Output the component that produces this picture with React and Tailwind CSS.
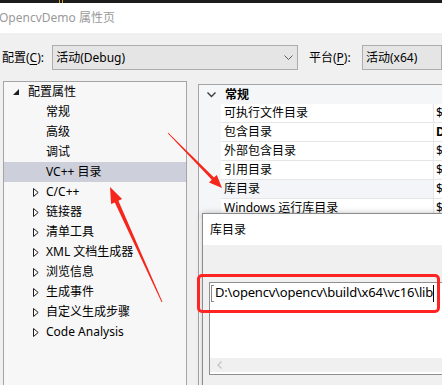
import React from 'react';

const treeRows = [
  { label: '配置属性', level: 0, icon: 'open' },
  { label: '常规', level: 1 },
  { label: '高级', level: 1 },
  { label: '调试', level: 1 },
  { label: 'VC++ 目录', level: 1, selected: true },
  { label: 'C/C++', level: 1, icon: 'closed' },
  { label: '链接器', level: 1, icon: 'closed' },
  { label: '清单工具', level: 1, icon: 'closed' },
  { label: 'XML 文档生成器', level: 1, icon: 'closed' },
  { label: '浏览信息', level: 1, icon: 'closed' },
  { label: '生成事件', level: 1, icon: 'closed' },
  { label: '自定义生成步骤', level: 1, icon: 'closed' },
  { label: 'Code Analysis', level: 1, icon: 'closed' },
];

const propRows = [
  { name: '可执行文件目录', value: '$' },
  { name: '包含目录', value: 'D', bold: true },
  { name: '外部包含目录', value: '$' },
  { name: '引用目录', value: '$' },
  { name: '库目录', value: '$', hot: true },
  { name: 'Windows 运行库目录', value: '$' },
];

// tapered red arrow, like the ones a screenshot tool draws
const arrowPoints = (x1, y1, x2, y2, headLen, headW, tailW, shaftW) => {
  const dx = x2 - x1;
  const dy = y2 - y1;
  const len = Math.sqrt(dx * dx + dy * dy);
  const ux = dx / len;
  const uy = dy / len;
  const nx = -uy;
  const ny = ux;
  const bx = x2 - ux * headLen;
  const by = y2 - uy * headLen;
  const pts = [
    [x1 + (nx * tailW) / 2, y1 + (ny * tailW) / 2],
    [bx + (nx * shaftW) / 2, by + (ny * shaftW) / 2],
    [bx + (nx * headW) / 2, by + (ny * headW) / 2],
    [x2, y2],
    [bx - (nx * headW) / 2, by - (ny * headW) / 2],
    [bx - (nx * shaftW) / 2, by - (ny * shaftW) / 2],
    [x1 - (nx * tailW) / 2, y1 - (ny * tailW) / 2],
  ];
  return pts.map(p => p.map(v => v.toFixed(1)).join(',')).join(' ');
};

const TreeIcon = ({ type }) => {
  if (type === 'open') {
    return (
      <svg width="6" height="6" viewBox="0 0 6 6">
        <polygon points="6,0 6,6 0,6" fill="#1e1e1e" />
      </svg>
    );
  }
  return (
    <svg width="6" height="9" viewBox="0 0 6 9">
      <polygon points="0.5,0.5 5.2,4.5 0.5,8.5" fill="none" stroke="#1e1e1e" strokeWidth="1" />
    </svg>
  );
};

const App = () => {
  return (
    <div className="relative w-[442px] h-[385px] overflow-hidden bg-[#f0f0f0] text-[12px] text-black font-['Noto_Sans','Noto_Sans_CJK_SC',sans-serif]">
      {/* dark strip at the very top */}
      <div className="flex h-[3px] bg-[#1c1c1c]">
        <div className="ml-[59px] w-px bg-[#c8a020]" />
        <div className="ml-[2px] w-px bg-[#c8a020]" />
      </div>

      {/* window title */}
      <div className="flex h-[30px] items-center bg-white text-[12px] text-[#9a9a9a]">
        <span className="-ml-px">OpencvDemo 属性页</span>
      </div>

      {/* configuration / platform bar */}
      <div className="flex h-[48px] items-start pt-[12px]">
        <div className="flex h-[25px] w-[55px] items-center pl-[2px]">
          配置(<span className="underline underline-offset-2">C</span>):
        </div>
        <div className="flex h-[25px] w-[259px] items-center justify-between border border-[#adadad] bg-[#e5e5e5] pl-[3px] pr-[4px]">
          <span>活动(Debug)</span>
          <svg width="9" height="6" viewBox="0 0 9 6">
            <polyline points="0.5,0.5 4.5,4.5 8.5,0.5" fill="none" stroke="#5a5a5a" strokeWidth="1" />
          </svg>
        </div>
        <div className="flex h-[25px] w-[67px] items-center pl-[11px]">
          平台(<span className="underline underline-offset-2">P</span>):
        </div>
        <div className="flex h-[25px] w-[80px] shrink-0 items-center border border-[#adadad] bg-[#e5e5e5] pl-[3px]">
          活动(x64)
        </div>
      </div>

      {/* main area */}
      <div className="flex">
        {/* tree */}
        <div className="ml-[3px] h-[310px] w-[184px] shrink-0 border border-[#a5a5a5] bg-[#f7f7f7]">
          {treeRows.map(row => (
            <div
              key={row.label}
              className={`flex h-[20px] items-center ${row.selected ? 'bg-[#cdcfda]' : ''} ${row.level === 0 ? 'pl-[9px]' : 'pl-[29px]'}`}
            >
              <div className={`flex items-center ${row.level === 0 ? 'w-[15px]' : 'w-[13px]'}`}>
                {row.icon && <TreeIcon type={row.icon} />}
              </div>
              <span className="whitespace-nowrap">{row.label}</span>
            </div>
          ))}
        </div>

        {/* property grid */}
        <div className="ml-[11px] mt-[3px] h-[310px] w-[260px] shrink-0 border-l border-t border-[#a5a5a5] bg-white">
          <div className="flex h-[19px] items-center bg-[#f5f6f8]">
            <div className="flex w-[22px] justify-center pl-[2px]">
              <svg width="9" height="6" viewBox="0 0 9 6">
                <polyline points="0.5,0.5 4.5,4.5 8.5,0.5" fill="none" stroke="#3c3c3c" strokeWidth="1.4" />
              </svg>
            </div>
            <span className="pl-[4px] font-bold">常规</span>
          </div>
          {propRows.map(row => (
            <div key={row.name} className="flex h-[19px]">
              <div className="w-[22px] bg-[#f5f6f8]" />
              <div
                className={`flex w-[213px] items-center border-b border-r border-[#e6e6e6] pl-[3px] ${row.hot ? 'bg-[#f3f5f9]' : 'bg-white'}`}
              >
                <span className="whitespace-nowrap">{row.name}</span>
              </div>
              <div className={`flex w-[20px] items-center border-b border-[#e6e6e6] pl-[2px] ${row.bold ? 'font-bold' : ''}`}>
                {row.value}
              </div>
            </div>
          ))}
        </div>
      </div>

      {/* 库目录 editor dialog */}
      <div className="absolute left-[202px] top-[213px] flex h-[185px] w-[260px] flex-col border border-[#8c8c8c] bg-[#f0f0f0] shadow-[0_0_6px_rgba(0,0,0,0.25)]">
        <div className="flex h-[31px] items-center bg-white pl-[7px]">库目录</div>
        <div className="pl-[6px] pt-[37px]">
          <div className="flex h-[93px] flex-col border border-[#8f8f8f] bg-white">
            <div className="flex h-[20px] items-center pl-px text-[13px]">
              <span className="h-[17px] w-[3px] border-b border-l border-t border-[#888]" />
              <span className="ml-[1px] whitespace-nowrap tracking-[-0.2px]">D:\opencv\opencv\build\x64\vc16\lib</span>
              <span className="h-[17px] w-px bg-black" />
            </div>
            <div className="flex-1" />
            <div className="mb-[2px] flex h-[14px] items-center bg-[#f0f0f0] pl-[7px]">
              <svg width="5" height="8" viewBox="0 0 5 8">
                <polyline points="4.5,0.5 1,4 4.5,7.5" fill="none" stroke="#c2c2c2" strokeWidth="1.2" />
              </svg>
            </div>
          </div>
        </div>
      </div>

      {/* red highlight box */}
      <div className="absolute left-[197px] top-[274px] h-[39px] w-[243px] rounded-[5px] border-[3px] border-[#ff2424]" />

      {/* red arrows */}
      <svg className="pointer-events-none absolute left-0 top-0" width="442" height="385" viewBox="0 0 442 385">
        <polygon points={arrowPoints(168, 133, 222, 188, 13, 11, 0.8, 3.2)} fill="#f5271d" />
        <polygon points={arrowPoints(162, 302, 110, 187, 16, 12, 0.8, 4)} fill="#f5271d" />
      </svg>
    </div>
  );
};

export default App;
